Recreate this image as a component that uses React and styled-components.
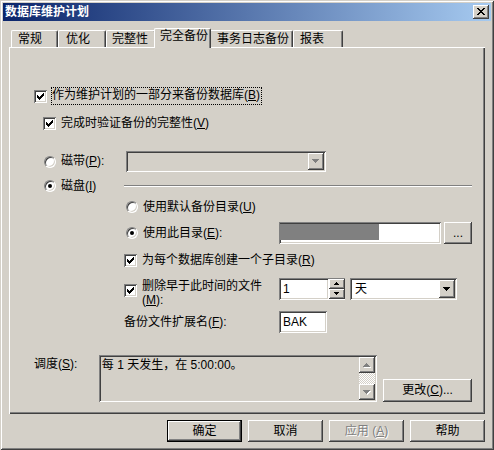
import React from "react";
import styled, { createGlobalStyle, css } from "styled-components";

const GlobalStyle = createGlobalStyle`
  html, body {
    margin: 0;
    padding: 0;
    background: #d4d0c8;
  }
  body {
    font-family: "Liberation Sans", "Noto Sans CJK SC", sans-serif;
    font-size: 12px;
    color: #000;
  }
  u {
    text-decoration: underline;
    text-underline-offset: 1px;
  }
`;

const raised = css`
  box-shadow: inset -1px -1px 0 #404040, inset 1px 1px 0 #fff,
    inset -2px -2px 0 #808080;
`;

const sunken = css`
  box-shadow: inset 1px 1px 0 #808080, inset -1px -1px 0 #fff,
    inset 2px 2px 0 #404040, inset -2px -2px 0 #d4d0c8;
`;

const Window = styled.div`
  width: 494px;
  height: 450px;
  box-sizing: border-box;
  padding: 3px;
  background: #d4d0c8;
  box-shadow: inset 1px 1px 0 #d4d0c8, inset -1px -1px 0 #404040,
    inset 2px 2px 0 #fff, inset -2px -2px 0 #808080;
  display: flex;
  flex-direction: column;
  overflow: hidden;
`;

const TitleBar = styled.div`
  flex: none;
  height: 18px;
  display: flex;
  align-items: center;
  justify-content: space-between;
  padding: 0 2px;
  background: linear-gradient(to right, #0a246a, #a6caf0);
`;

const TitleText = styled.span`
  color: #fff;
  font-weight: bold;
  line-height: 14px;
`;

const CloseButton = styled.span`
  width: 16px;
  height: 14px;
  box-sizing: border-box;
  background: #d4d0c8;
  ${raised};
  display: flex;
  align-items: center;
  justify-content: center;
  padding: 0 1px 1px 0;
`;

const Body = styled.div`
  flex: 1;
  display: flex;
  flex-direction: column;
  padding: 7px 6px 0 6px;
`;

const TabStrip = styled.div`
  height: 19px;
  display: flex;
  align-items: flex-end;
  padding-left: 2px;
  position: relative;
  z-index: 1;
`;

const Tab = styled.div`
  box-sizing: border-box;
  width: ${(p) => p.$w}px;
  height: 17px;
  padding: 2px 0 0 ${(p) => p.$pad}px;
  line-height: 13px;
  white-space: nowrap;
  background: #d4d0c8;
  border-top: 1px solid #fff;
  border-left: 1px solid #fff;
  border-right: 1px solid #404040;
  border-radius: 2px 2px 0 0;
  box-shadow: inset -1px 0 0 #808080;

  ${(p) =>
    p.$active &&
    css`
      height: 20px;
      margin: 0 -2px -1px;
      padding-top: 1px;
      position: relative;
      z-index: 2;
    `}
`;

const Panel = styled.div`
  flex: none;
  height: 367px;
  box-sizing: border-box;
  padding-right: 13px;
  background: #d4d0c8;
  box-shadow: inset 1px 1px 0 #fff, inset -1px -1px 0 #404040,
    inset -2px -2px 0 #808080;
  display: flex;
  flex-direction: column;
`;

const CheckRow = styled.div`
  height: 16px;
  display: flex;
  align-items: center;
  gap: 5px;
  margin-top: ${(p) => p.$mt}px;
  margin-left: ${(p) => p.$ml}px;
`;

const Label = styled.span`
  line-height: 13px;
  white-space: nowrap;
`;

const FocusLabel = styled(Label)`
  padding: 1px 1px 2px 0;
  outline: 1px dotted #000;
`;

const CheckBox = styled.span`
  flex: none;
  width: 13px;
  height: 13px;
  box-sizing: border-box;
  background: #fff;
  ${sunken};
  display: inline-flex;
  margin-top: ${(p) => p.$mt || 0}px;
`;

const RadioDot = styled.span`
  flex: none;
  position: relative;
  width: 12px;
  height: 12px;
  box-sizing: border-box;
  border-radius: 50%;
  background: #fff;
  border: 1px solid;
  border-color: #808080 #fff #fff #808080;
  box-shadow: inset 1px 1px 0 #404040, inset -1px -1px 0 #d4d0c8;
  margin-left: ${(p) => p.$ml || 0}px;

  ${(p) =>
    p.$on &&
    css`
      &::after {
        content: "";
        position: absolute;
        left: 3px;
        top: 3px;
        width: 4px;
        height: 4px;
        border-radius: 50%;
        background: #000;
      }
    `}
`;

const RadioLabel = styled.div`
  display: flex;
  align-items: center;
  gap: 5px;
`;

const DeviceRow = styled.div`
  height: ${(p) => p.$h}px;
  margin-top: ${(p) => p.$mt}px;
  margin-left: 35px;
  display: grid;
  grid-template-columns: 82px 1fr;
  align-items: center;
`;

const Rule = styled.div`
  height: 0;
  margin-left: -2px;
  border-top: 1px solid #808080;
  border-bottom: 1px solid #fff;
`;

const Combo = styled.div`
  width: ${(p) => p.$w}px;
  height: ${(p) => p.$h}px;
  box-sizing: border-box;
  padding: 2px;
  background: ${(p) => (p.$disabled ? "#d4d0c8" : "#fff")};
  ${sunken};
  display: flex;
`;

const ComboText = styled.span`
  flex: 1;
  padding-left: 3px;
  line-height: 18px;
`;

const DropButton = styled.span`
  flex: none;
  width: 16px;
  background: #d4d0c8;
  ${raised};
  display: flex;
  align-items: center;
  justify-content: center;
`;

const SubBlock = styled.div`
  margin-left: 115px;
  display: flex;
  flex-direction: column;
`;

const OptionRow = styled.div`
  height: ${(p) => p.$h}px;
  margin-top: ${(p) => p.$mt}px;
  display: grid;
  grid-template-columns: 155px 1fr;
  align-items: ${(p) => (p.$top ? "start" : "center")};
`;

const Lead = styled.div`
  display: flex;
  align-items: ${(p) => (p.$top ? "flex-start" : "center")};
  gap: 5px;
`;

const Fields = styled.div`
  display: flex;
  align-items: center;
  gap: ${(p) => p.$gap || 0}px;
`;

const Edit = styled.div`
  width: ${(p) => p.$w}px;
  height: 22px;
  box-sizing: border-box;
  padding: 2px 2px 2px 4px;
  background: #fff;
  ${sunken};
  line-height: 18px;
`;

const Redacted = styled.div`
  width: 99px;
  height: 16px;
  margin: 0 0 0 -3px;
  background: #808080;
`;

const TwoLine = styled(Label)`
  line-height: 14px;
  margin-top: 1px;
`;

const SpinGroup = styled.div`
  display: flex;
  height: 22px;
`;

const SpinButtons = styled.div`
  width: 16px;
  display: flex;
  flex-direction: column;
  padding: 1px 0;
  box-shadow: inset 0 1px 0 #808080, inset 0 -1px 0 #fff;
`;

const SpinButton = styled.span`
  flex: 1;
  background: #d4d0c8;
  ${raised};
  display: flex;
  align-items: center;
  justify-content: center;
`;

const ScheduleRow = styled.div`
  margin-top: 22px;
  margin-left: 25px;
  height: 47px;
  display: flex;
  gap: 6px;
`;

const ScheduleLabel = styled(Label)`
  width: 65px;
  margin-right: -6px;
  padding-top: 3px;
`;

const ScheduleBox = styled.div`
  width: 279px;
  box-sizing: border-box;
  padding: 2px;
  background: #d4d0c8;
  ${sunken};
  display: flex;
`;

const ScheduleText = styled.span`
  flex: 1;
  padding: 2px 0 0 1px;
  line-height: 13px;
  white-space: nowrap;
`;

const ScrollBar = styled.div`
  width: 16px;
  display: flex;
  flex-direction: column;
`;

const ScrollArrow = styled.span`
  height: 16px;
  flex: none;
  background: #d4d0c8;
  ${raised};
  display: flex;
  align-items: center;
  justify-content: center;
`;

const ScrollTrack = styled.span`
  flex: 1;
  background: repeating-conic-gradient(#fff 0 25%, #d4d0c8 0 50%) 0 0 / 2px
    2px;
`;

const PushButton = styled.button`
  width: ${(p) => p.$w}px;
  height: ${(p) => p.$h}px;
  box-sizing: border-box;
  margin: 0;
  padding: 0;
  font: inherit;
  line-height: 13px;
  color: #000;
  background: #d4d0c8;
  border: none;
  ${raised};
  align-self: ${(p) => (p.$end ? "flex-end" : "auto")};

  ${(p) =>
    p.$default &&
    css`
      border: 1px solid #000;
    `}

  ${(p) =>
    p.disabled &&
    css`
      color: #808080;
      text-shadow: 1px 1px 0 #fff;
    `}
`;

const ButtonRow = styled.div`
  margin-top: 6px;
  display: flex;
  justify-content: flex-end;
  gap: 6px;
`;

const TICK = [
  [3, 5],
  [4, 6],
  [5, 7],
  [6, 6],
  [7, 5],
  [8, 4],
  [9, 3],
];

const CROSS = [
  [0, 0, 2], [6, 0, 2],
  [1, 1, 2], [5, 1, 2],
  [2, 2, 4],
  [3, 3, 2],
  [2, 4, 4],
  [1, 5, 2], [5, 5, 2],
  [0, 6, 2], [6, 6, 2],
];

function Check() {
  return (
    <svg width="13" height="13" shapeRendering="crispEdges">
      {TICK.map(([x, y]) => (
        <rect key={x} x={x} y={y} width="1" height="3" fill="#000" />
      ))}
    </svg>
  );
}

function Arrow({ size = 7, up, color = "#000", shadow }) {
  const rows = Math.ceil(size / 2);
  const rects = [];
  for (let i = 0; i < rows; i++) {
    const y = up ? rows - 1 - i : i;
    rects.push({ x: i, y, w: size - 2 * i });
  }
  return (
    <svg
      width={size + 1}
      height={rows + 1}
      shapeRendering="crispEdges"
      style={{ display: "block" }}
    >
      {shadow &&
        rects.map((r) => (
          <rect key={"s" + r.y} x={r.x + 1} y={r.y + 1} width={r.w} height="1" fill="#fff" />
        ))}
      {rects.map((r) => (
        <rect key={r.y} x={r.x} y={r.y} width={r.w} height="1" fill={color} />
      ))}
    </svg>
  );
}

const Key = ({ k, colon }) => (
  <>
    (<u>{k}</u>){colon ? ":" : ""}
  </>
);

export default function App() {
  return (
    <>
      <GlobalStyle />
      <Window>
        <TitleBar>
          <TitleText>数据库维护计划</TitleText>
          <CloseButton>
            <svg width="8" height="7" shapeRendering="crispEdges">
              {CROSS.map(([x, y, w]) => (
                <rect key={`${x}-${y}`} x={x} y={y} width={w} height="1" fill="#000" />
              ))}
            </svg>
          </CloseButton>
        </TitleBar>

        <Body>
          <TabStrip>
            <Tab $w={47} $pad={6}>常规</Tab>
            <Tab $w={48} $pad={7}>优化</Tab>
            <Tab $w={50} $pad={5}>完整性</Tab>
            <Tab $w={57} $pad={5} $active>
              完全备份
            </Tab>
            <Tab $w={84} $pad={7}>事务日志备份</Tab>
            <Tab $w={50} $pad={6}>报表</Tab>
          </TabStrip>

          <Panel>
            <CheckRow $mt={41} $ml={25}>
              <CheckBox>
                <Check />
              </CheckBox>
              <FocusLabel>
                作为维护计划的一部分来备份数据库<Key k="B" />
              </FocusLabel>
            </CheckRow>

            <CheckRow $mt={11} $ml={34}>
              <CheckBox>
                <Check />
              </CheckBox>
              <Label>
                完成时验证备份的完整性<Key k="V" />
              </Label>
            </CheckRow>

            <DeviceRow $h={21} $mt={20}>
              <RadioLabel>
                <RadioDot />
                <Label>
                  磁带<Key k="P" colon />
                </Label>
              </RadioLabel>
              <Combo $w={200} $h={21} $disabled>
                <ComboText />
                <DropButton>
                  <Arrow color="#808080" />
                </DropButton>
              </Combo>
            </DeviceRow>

            <DeviceRow $h={16} $mt={6}>
              <RadioLabel>
                <RadioDot $on />
                <Label>
                  磁盘<Key k="I" />
                </Label>
              </RadioLabel>
              <Rule />
            </DeviceRow>

            <SubBlock>
              <OptionRow $h={16} $mt={5}>
                <Lead>
                  <RadioDot $ml={2} />
                  <Label>
                    使用默认备份目录<Key k="U" />
                  </Label>
                </Lead>
              </OptionRow>

              <OptionRow $h={22} $mt={7}>
                <Lead>
                  <RadioDot $ml={2} $on />
                  <Label>
                    使用此目录<Key k="E" colon />
                  </Label>
                </Lead>
                <Fields $gap={3}>
                  <Edit $w={162}>
                    <Redacted />
                  </Edit>
                  <PushButton $w={28} $h={22}>
                    ...
                  </PushButton>
                </Fields>
              </OptionRow>

              <OptionRow $h={16} $mt={8}>
                <Lead>
                  <CheckBox>
                    <Check />
                  </CheckBox>
                  <Label>
                    为每个数据库创建一个子目录<Key k="R" />
                  </Label>
                </Lead>
              </OptionRow>

              <OptionRow $h={29} $mt={10} $top>
                <Lead $top>
                  <CheckBox $mt={6}>
                    <Check />
                  </CheckBox>
                  <TwoLine>
                    删除早于此时间的文件
                    <br />
                    <Key k="M" colon />
                  </TwoLine>
                </Lead>
                <Fields $gap={5}>
                  <SpinGroup>
                    <Edit $w={50}>1</Edit>
                    <SpinButtons>
                      <SpinButton>
                        <Arrow size={5} up />
                      </SpinButton>
                      <SpinButton>
                        <Arrow size={5} />
                      </SpinButton>
                    </SpinButtons>
                  </SpinGroup>
                  <Combo $w={107} $h={22}>
                    <ComboText>天</ComboText>
                    <DropButton>
                      <Arrow />
                    </DropButton>
                  </Combo>
                </Fields>
              </OptionRow>

              <OptionRow $h={22} $mt={4}>
                <Label>
                  备份文件扩展名<Key k="F" colon />
                </Label>
                <Fields>
                  <Edit $w={48}>BAK</Edit>
                </Fields>
              </OptionRow>
            </SubBlock>

            <ScheduleRow>
              <ScheduleLabel>
                调度<Key k="S" colon />
              </ScheduleLabel>
              <ScheduleBox>
                <ScheduleText>每 1 天发生，在 5:00:00。</ScheduleText>
                <ScrollBar>
                  <ScrollArrow>
                    <Arrow up color="#808080" shadow />
                  </ScrollArrow>
                  <ScrollTrack />
                  <ScrollArrow>
                    <Arrow color="#808080" shadow />
                  </ScrollArrow>
                </ScrollBar>
              </ScheduleBox>
              <PushButton $w={89} $h={23} $end>
                更改<Key k="C" />...
              </PushButton>
            </ScheduleRow>
          </Panel>

          <ButtonRow>
            <PushButton $w={75} $h={22} $default>
              确定
            </PushButton>
            <PushButton $w={75} $h={22}>
              取消
            </PushButton>
            <PushButton $w={75} $h={22} disabled>
              应用 <Key k="A" />
            </PushButton>
            <PushButton $w={75} $h={22}>
              帮助
            </PushButton>
          </ButtonRow>
        </Body>
      </Window>
    </>
  );
}
